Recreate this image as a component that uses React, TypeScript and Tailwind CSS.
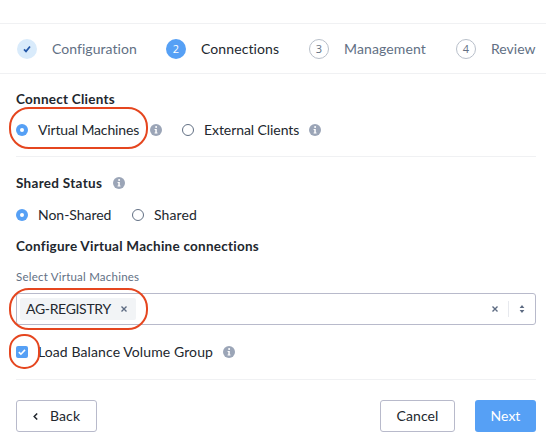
import type { ReactNode } from 'react';

function Info() {
  return (
    <svg className="size-3 shrink-0" viewBox="0 0 12 12">
      <circle cx="6" cy="6" r="6" fill="#9ba5b7" />
      <circle cx="6.1" cy="3" r="1" fill="#fff" />
      <path d="M4.6 4.9h2.2v3.5h.7v1H4.6v-1h.7V5.9h-.7z" fill="#fff" />
    </svg>
  );
}

function Radio({ on }: { on?: boolean }) {
  return on ? (
    <span className="flex size-3 shrink-0 items-center justify-center rounded-full bg-[#56a0f5]">
      <span className="size-1 rounded-full bg-white" />
    </span>
  ) : (
    <span className="size-3 shrink-0 rounded-full border border-[#627084] bg-white" />
  );
}

function Cross() {
  return (
    <svg className="size-1.5 shrink-0" viewBox="0 0 6 6">
      <path d="M.5.5l5 5M5.5.5l-5 5" stroke="#5d6b82" strokeWidth="1.35" />
    </svg>
  );
}

function Step({ mark, circle, label, text }: { mark: ReactNode; circle: string; label: string; text: string }) {
  return (
    <div className="flex items-center">
      <span className={`flex size-5 shrink-0 items-center justify-center rounded-full font-['Open_Sans',sans-serif] text-[11px] ${circle}`}>
        {mark}
      </span>
      <span className={`ml-[15px] whitespace-nowrap ${text}`}>{label}</span>
    </div>
  );
}

export default function App() {
  return (
    <div className="relative h-[443px] w-[546px] overflow-hidden bg-white pt-[23px] font-[Lato,sans-serif] text-[14px] leading-5 text-[#22272e]">
      <nav className="flex h-[51px] items-center border-y border-[#f0f1f3] pt-px pl-[17px]">
        <Step
          circle="bg-[#d9ebfb]"
          text="w-[114px] tracking-[0.05px] text-[#627084]"
          label="Configuration"
          mark={
            <svg className="size-2" viewBox="0 0 8 8">
              <path d="M1 4.4l2 2L7 1.5" fill="none" stroke="#2457a8" strokeWidth="1.7" />
            </svg>
          }
        />
        <Step circle="bg-[#56a0f5] text-white" text="w-[108px] tracking-[0.1px]" label="Connections" mark="2" />
        <Step circle="border border-[#b8bfca] text-[#627084]" text="w-[112px] tracking-[0.12px] text-[#627084]" label="Management" mark="3" />
        <Step circle="border border-[#b8bfca] text-[#627084]" text="text-[#627084]" label="Review" mark="4" />
      </nav>

      <main className="ml-4 w-[520px]">
        <section className="h-[83px] border-b border-[#f0f1f3] pt-[15px]">
          <h2 className="text-[13.5px] font-bold tracking-[0.25px]">Connect Clients</h2>
          <div className="mt-[11px] flex h-5 items-center">
            <Radio on />
            <span className="ml-2.5 w-28 whitespace-nowrap tracking-[-0.15px]">Virtual Machines</span>
            <Info />
            <span className="w-5" />
            <Radio />
            <span className="ml-2.5 w-[105px] whitespace-nowrap tracking-[-0.07px]">External Clients</span>
            <Info />
          </div>
        </section>

        <section className="pt-4">
          <div className="flex h-5 items-center">
            <h2 className="w-[97px] text-[13.5px] font-bold tracking-[0.3px]">Shared Status</h2>
            <Info />
          </div>
          <div className="mt-3 flex h-5 items-center">
            <Radio on />
            <span className="ml-2.5 w-[94px] tracking-[-0.03px]">Non-Shared</span>
            <Radio />
            <span className="ml-2.5 tracking-[0.1px]">Shared</span>
          </div>
          <h2 className="mt-[11px] text-[13.5px] font-bold tracking-[0.25px]">Configure Virtual Machine connections</h2>
          <div className="mt-[13px] h-4 text-[11.5px] leading-4 tracking-[0.22px] text-[#627084]">Select Virtual Machines</div>
          <div className="mt-2 flex h-8 items-center rounded-[3px] border border-[#b8bacb] pl-[3px]">
            <span className="flex h-[22px] w-[116px] items-center rounded-[2px] bg-[#f2f4f6] pl-1.5">
              <span className="w-[95px] whitespace-nowrap tracking-[-0.33px]">AG-REGISTRY</span>
              <Cross />
            </span>
            <span className="ml-[356px] flex items-center">
              <Cross />
              <span className="ml-2.5 h-4 w-px bg-[#e7e9ee]" />
              <svg className="ml-2.5 h-2 w-[6px]" viewBox="0 0 6 8">
                <path d="M3 0l2.4 3H.6zM3 8l2.4-3H.6z" fill="#5d6b82" />
              </svg>
            </span>
          </div>
          <div className="mt-[17px] flex h-5 items-center">
            <span className="flex size-3 items-center justify-center rounded-[2px] bg-[#56a0f5]">
              <svg className="size-2" viewBox="0 0 8 8">
                <path d="M.8 4.2l2.1 2L7 1.9" fill="none" stroke="#fff" strokeWidth="1.6" />
              </svg>
            </span>
            <span className="ml-2.5 w-[185px] whitespace-nowrap tracking-[0.1px]">Load Balance Volume Group</span>
            <Info />
          </div>
        </section>

        <footer className="mt-[17px] flex border-t border-[#f0f1f3] pt-5">
          <button className="flex h-8 w-[81px] items-center rounded-[3px] border border-[#b8bacb] pl-4">
            <svg className="h-[7px] w-[5px]" viewBox="0 0 5 7">
              <path d="M4.2.5L1.2 3.5l3 3" fill="none" stroke="#22272e" strokeWidth="1.5" />
            </svg>
            <span className="ml-3 tracking-[0.1px]">Back</span>
          </button>
          <button className="ml-auto h-8 w-[75px] rounded-[3px] border border-[#b8bacb] tracking-[0.1px]">Cancel</button>
          <button className="ml-5 h-8 w-[61px] rounded-[3px] bg-[#56a0f5] text-white">Next</button>
        </footer>
      </main>

      <span className="absolute top-[107px] left-[9px] h-[42px] w-[139px] rounded-[20px] border-2 border-[#e5461f]" />
      <span className="absolute top-[288px] left-[9px] h-[42px] w-[139px] rounded-[20px] border-2 border-[#e5461f]" />
      <span className="absolute top-[334px] left-[9px] h-[35px] w-[31px] rounded-[15px] border-2 border-[#e5461f]" />
    </div>
  );
}
